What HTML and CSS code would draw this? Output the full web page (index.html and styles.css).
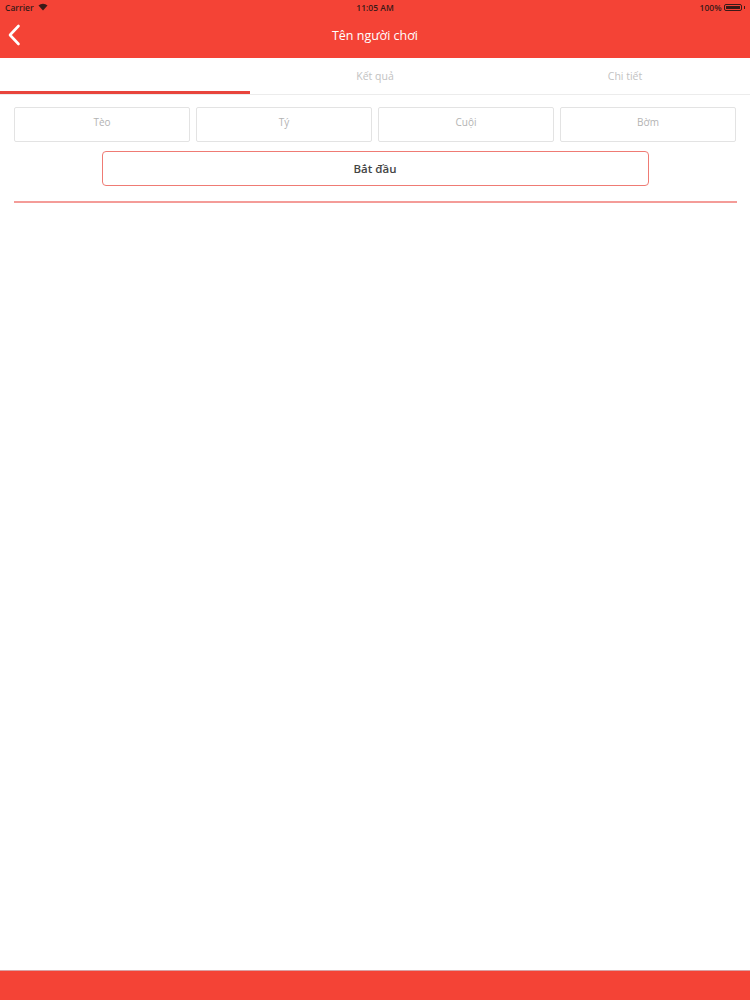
FILE: index.html
```html
<!DOCTYPE html>
<html lang="vi">
<head>
<meta charset="utf-8">
<title>Tên người chơi</title>
<link rel="stylesheet" href="styles.css">
</head>
<body>
<div class="app">
  <header class="header">
    <div class="status">
      <div class="status-left">Carrier
        <svg class="wifi" width="10" height="8" viewBox="0 0 10 8"><path d="M5 7.5 L0.5 2.6 A6.6 6.6 0 0 1 9.5 2.6 Z" fill="#3a1a18"/></svg>
      </div>
      <div class="status-time">11:05 AM</div>
      <div class="status-right">100%
        <span class="battery"><span class="battery-fill"></span></span><span class="battery-tip"></span>
      </div>
    </div>
    <div class="navbar">
      <svg class="back" width="14" height="22" viewBox="0 0 14 22"><path d="M11.5 2 L3 11 L11.5 20" fill="none" stroke="#fff" stroke-width="2.6" stroke-linecap="round" stroke-linejoin="round"/></svg>
      <div class="title">Tên người chơi</div>
    </div>
  </header>
  <nav class="tabs">
    <div class="tab active"></div>
    <div class="tab">Kết quả</div>
    <div class="tab">Chi tiết</div>
  </nav>
  <main class="content">
    <div class="players">
      <div class="player">Tèo</div>
      <div class="player">Tý</div>
      <div class="player">Cuội</div>
      <div class="player">Bờm</div>
    </div>
    <div class="start-row">
      <button class="start">Bắt đầu</button>
    </div>
    <div class="divider"></div>
  </main>
  <footer class="bottom"></footer>
</div>
</body>
</html>
```
FILE: styles.css
```css
* { box-sizing: border-box; }
html, body { margin: 0; padding: 0; }
body {
  font-family: "Open Sans", "Noto Sans", "Liberation Sans", sans-serif;
  background: #fff;
  width: 750px;
  height: 1000px;
  overflow: hidden;
}
.app {
  display: flex;
  flex-direction: column;
  height: 1000px;
}
.header {
  background: #f44336;
  height: 58px;
  flex: none;
}
.status {
  height: 14px;
  display: flex;
  align-items: center;
  justify-content: space-between;
  padding: 0 5px 0 5px;
  font-size: 8.5px;
  font-weight: 600;
  color: #3a1a18;
}
.status-left, .status-right { display: flex; align-items: center; gap: 4px; width: 120px; }
.status-right { justify-content: flex-end; gap: 2px; }
.status-time { text-align: center; }
.battery {
  display: inline-block;
  width: 18px;
  height: 7px;
  border: 1px solid #3a1a18;
  border-radius: 2px;
  padding: 1px;
}
.battery-fill { display: block; width: 100%; height: 100%; background: #3a1a18; }
.battery-tip { display: inline-block; width: 1.5px; height: 3px; background: #3a1a18; }
.navbar {
  height: 44px;
  display: flex;
  align-items: center;
  position: relative;
  padding-left: 7px;
}
.back { flex: none; margin-top: -2px; }
.title {
  position: absolute;
  left: 0; right: 0;
  text-align: center;
  color: #fff;
  font-size: 12.5px;
  margin-top: -2px;
  pointer-events: none;
}
.tabs {
  display: grid;
  grid-template-columns: repeat(3, 1fr);
  height: 37px;
  border-bottom: 1px solid #ececec;
  flex: none;
}
.tab {
  display: flex;
  align-items: center;
  justify-content: center;
  font-size: 10.5px;
  color: #c2c2c2;
  padding-top: 2px;
  border-bottom: 3px solid transparent;
}
.tab.active { border-bottom-color: #e8453c; }
.content {
  flex: 1;
  padding: 12px 14px 0 14px;
}
.players {
  display: grid;
  grid-template-columns: repeat(4, 1fr);
  gap: 6px;
}
.player {
  height: 35px;
  border: 1px solid #e3e3e3;
  border-radius: 2px;
  display: flex;
  align-items: center;
  justify-content: center;
  font-size: 10px;
  color: #b3b3b3;
  padding-bottom: 5px;
}
.start-row {
  display: flex;
  justify-content: center;
  margin-top: 9px;
}
.start {
  width: 547px;
  height: 35px;
  border: 1.5px solid #ef7b74;
  border-radius: 4px;
  background: #fff;
  font-family: inherit;
  font-size: 11.5px;
  font-weight: 600;
  color: #444;
  padding-bottom: 2px;
}
.divider {
  margin-top: 15px;
  height: 2px;
  background: #f49c98;
  margin-right: -1px;
}
.bottom {
  flex: none;
  height: 30px;
  background: #f44336;
  border-top: 1px solid #d9a0a3;
}
```
